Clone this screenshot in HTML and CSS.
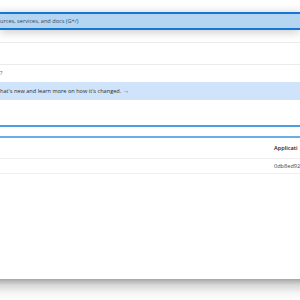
FILE: index.html
```html
<!DOCTYPE html>
<html>
<head>
<meta charset="utf-8">
<link rel="stylesheet" href="styles.css">
</head>
<body>
<div class="page">
  <div class="top">
    <div class="search">urces, services, and docs (G+/)</div>
  </div>
  <div class="row r1"></div>
  <div class="row r2"></div>
  <div class="q">?</div>
  <div class="banner">hat's new and learn more on how it's changed. <span class="arrow">→</span></div>
  <div class="gap"></div>
  <div class="field"></div>
  <div class="thead"><span class="cell">Applicati</span></div>
  <div class="trow"><span class="cell">0db8ed92</span></div>
  <div class="rest"></div>
</div>
<div class="shadow"></div>
</body>
</html>
```
FILE: styles.css
```css
html, body {
  margin: 0;
  padding: 0;
  background: #fff;
  overflow: hidden;
}
body {
  width: 300px;
  height: 300px;
  font-family: "Open Sans", "Noto Sans", sans-serif;
  color: #323130;
}
.page {
  height: 279px;
  display: flex;
  flex-direction: column;
  background: #fff;
}
.top {
  padding-top: 12px;
  background: linear-gradient(#fff 0, #fdfdfd 6px, #f2f2f2 12px);
}
.search {
  height: 14px;
  border-top: 2px solid #1677d2;
  border-bottom: 2px solid #1677d2;
  background: #b4d6f3;
  font-size: 5.6px;
  line-height: 14px;
  color: #33475c;
  box-shadow: 0 3px 8px rgba(0,0,0,0.18);
  position: relative;
}
.row {
  border-bottom: 1px solid #ebebeb;
}
.r1 { height: 12px; }
.r2 { height: 21px; }
.q {
  height: 17px;
  font-size: 5.6px;
  line-height: 16px;
  color: #444;
}
.banner {
  height: 18px;
  background: #cfe4fb;
  font-size: 5.6px;
  line-height: 18px;
  color: #2a2a2a;
}
.arrow {
  color: #1677d2;
  font-size: 6.5px;
}
.gap { height: 25px; }
.field {
  height: 9px;
  border-top: 2px solid #4c9ee3;
  border-bottom: 2px solid #6aaee8;
}
.thead {
  height: 20px;
  border-bottom: 1px solid #efefef;
  display: flex;
  align-items: center;
  justify-content: flex-end;
  font-size: 5.6px;
  font-weight: 600;
  color: #222;
}
.trow {
  height: 14px;
  border-bottom: 1px solid #efefef;
  display: flex;
  align-items: center;
  justify-content: flex-end;
  font-size: 5.6px;
  color: #444;
}
.cell {
  width: 26px;
  white-space: nowrap;
}
.rest { flex: 1; }
.shadow {
  height: 21px;
  background: linear-gradient(#a6a6a6, #d8d8d8 6px, #f4f4f4 14px, #fff 21px);
}
```
